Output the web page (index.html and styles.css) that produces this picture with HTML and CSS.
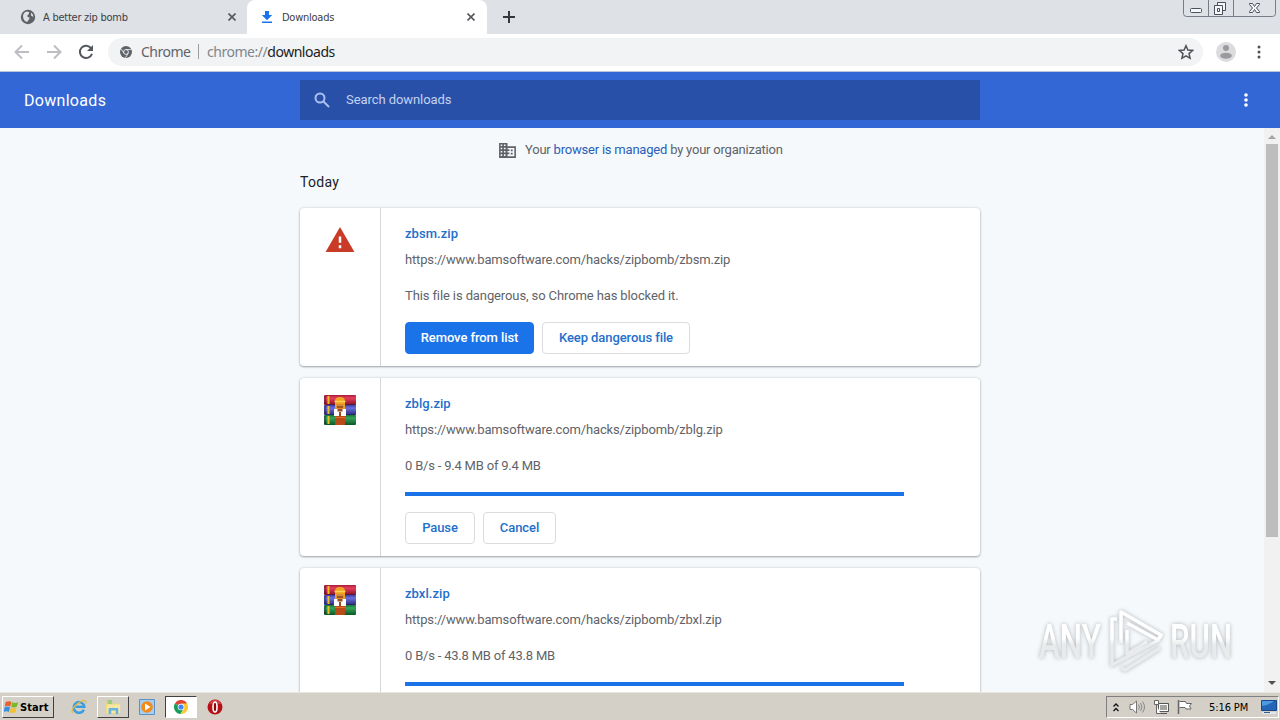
FILE: index.html
```html
<!DOCTYPE html>
<html lang="en">
<head>
  <meta charset="UTF-8">
  <title>Downloads</title>
  <link rel="stylesheet" href="styles.css">
</head>
<body>
  <!-- shared icons -->
  <svg class="defs" width="0" height="0">
    <linearGradient id="red" x2="0" y2="1"><stop offset="0" stop-color="#a51c38"/><stop offset=".3" stop-color="#e5405c"/><stop offset="1" stop-color="#8c1025"/></linearGradient>
    <linearGradient id="blue" x2="0" y2="1"><stop offset="0" stop-color="#3b3da0"/><stop offset=".3" stop-color="#6c70dc"/><stop offset="1" stop-color="#292a80"/></linearGradient>
    <linearGradient id="green" x2="0" y2="1"><stop offset="0" stop-color="#187338"/><stop offset=".3" stop-color="#36a55b"/><stop offset="1" stop-color="#0b5628"/></linearGradient>
    <symbol id="rar" viewBox="0 0 32 32">
      <rect y="1" width="32" height="10" rx="1" fill="url(#red)"/>
      <rect y="11" width="32" height="10" rx="1" fill="url(#blue)"/>
      <rect y="21" width="32" height="10" rx="1" fill="url(#green)"/>
      <path d="M1 2v8M1 12v8M1 22v8" stroke="#20143c" stroke-opacity=".4" stroke-width="2"/>
      <path d="M4.500 2v8M4.500 12v8M4.500 22v8" stroke="#e9bd28" stroke-width="2"/>
      <path d="M3 10.500h29M3 20.500h29" stroke="#28204a" stroke-opacity=".55"/>
      <rect x="11" y="22" width="10" height="9" fill="#b84b18"/>
      <path d="M11 16V7q0-4 5-4t5 4v9z" fill="#f0a321"/>
      <path d="M10.500 7.500h11" stroke="#ffd05a" stroke-width="1.500"/>
      <path d="M12.500 10h7v5h-7z" fill="#d98a3c"/>
      <path d="M13 13h6" stroke="#8a4316" stroke-width="1.500"/>
      <path d="M10 15h12v7H10z" fill="#fff"/>
      <path d="M13.500 15h5v2.500h-5zM15 18h2v4h-2z" fill="#9a4a24"/>
      <path d="M11 23.500h10" stroke="#e36e2c"/>
    </symbol>
  </svg>

  <div class="tabstrip">
    <div class="tab">
      <svg class="favicon" viewBox="0 0 16 16"><circle cx="8" cy="8" r="7.200" fill="#5f6368"/><path d="M3 7.500Q3 4 6.500 2.600L9 3v2L7.500 6v2l2 .5L9 10.500 7 13Q3.500 12 3 7.500zM11 3.500q2.500 1.500 2.500 4.500L11 6.500z" fill="#dee1e6"/></svg>
      <span class="tab-title">A better zip bomb</span>
      <svg class="close" viewBox="0 0 8 8"><path d="M.5.5l7 7m0-7l-7 7"/></svg>
    </div>
    <div class="tab active">
      <svg class="favicon" viewBox="0 0 16 16"><path d="M6 2h4v4h3.200L8 11.200 2.800 6H6zM3 12.500h10V14H3z" fill="#1a73e8"/></svg>
      <span class="tab-title">Downloads</span>
      <svg class="close" viewBox="0 0 8 8"><path d="M.5.5l7 7m0-7l-7 7"/></svg>
    </div>
    <svg class="plus" viewBox="0 0 12 12"><path d="M6 0v12M0 6h12"/></svg>
    <svg class="winbtns" viewBox="0 0 93 17">
      <path d="M.5 0v13.500q0 3 3 3h86q3 0 3-3V0M25.500 0v16M50.500 0v16" fill="none" stroke="#777d87"/>
      <g fill="#f5f6f8" stroke="#4b515c"><rect x="7.500" y="8.500" width="11" height="4" rx="1"/><path d="M34.500 2.500h8v8h-8z"/><path d="M31.500 5.500h8v9h-8z"/><path d="M34.500 8.500h2v3h-2z"/><path d="M66.500 3.500h3l2 3 2-3h3v1l-3 3.500 3 3.500v1h-3l-2-3-2 3h-3v-1l3-3.500-3-3.500z"/></g>
    </svg>
  </div>

  <div class="toolbar">
    <svg class="nav off" viewBox="0 0 16 16"><path d="M15 8H2M8 1.500L1.500 8 8 14.500"/></svg>
    <svg class="nav off" viewBox="0 0 16 16"><path d="M1 8h13M8 1.500L14.500 8 8 14.500"/></svg>
    <svg class="nav" viewBox="0 0 16 16"><path d="M13.200 4.300A6.200 6.200 0 1 0 14 9.800"/><path d="M15 1v6H9z" class="fill"/></svg>
    <div class="omnibox">
      <svg class="site" viewBox="0 0 12 12"><circle cx="6" cy="6" r="6" fill="#5f6368"/><circle cx="6" cy="6" r="2.400" fill="#5f6368" stroke="#f1f3f4" stroke-width=".9"/><path d="M6 3.500h5.500M3.800 7.200L1.200 2.800M8.200 7.200l-2.700 4.500" stroke="#f1f3f4" stroke-width=".8"/></svg>
      <span class="scheme-name">Chrome</span>
      <span class="sep"></span>
      <span class="url">chrome://<b>downloads</b></span>
      <svg class="star" viewBox="0 0 16 16"><path d="M8 1.700l1.900 4.400 4.700.4-3.600 3.100 1.100 4.700L8 11.800l-4.100 2.500L5 9.600 1.400 6.500l4.700-.4z"/></svg>
    </div>
    <svg class="avatar" viewBox="0 0 20 20"><circle cx="10" cy="10" r="10" fill="#dcdcde"/><circle cx="10" cy="6" r="3" fill="#999b9e"/><ellipse cx="10" cy="13.700" rx="5.800" ry="3" fill="#999b9e"/></svg>
    <svg class="dots" viewBox="0 0 4 14"><circle cx="2" cy="2" r="1.500"/><circle cx="2" cy="7" r="1.500"/><circle cx="2" cy="12" r="1.500"/></svg>
  </div>

  <header class="header">
    <h1>Downloads</h1>
    <div class="search">
      <svg viewBox="0 0 16 16"><circle cx="6" cy="6" r="4.500"/><path d="M9.500 9.500l5.500 5.500"/></svg>
      <span>Search downloads</span>
    </div>
    <svg class="dots light" viewBox="0 0 4 14"><circle cx="2" cy="2" r="1.800"/><circle cx="2" cy="7" r="1.800"/><circle cx="2" cy="12" r="1.800"/></svg>
  </header>

  <div class="content">
    <main class="page">
      <div class="managed">
        <svg viewBox="0 0 18 16"><path fill-rule="evenodd" d="M0 0h9v3.500h9V16H0zM1.700 1.700v1.600h1.700V1.700zm3.500 0v1.600h1.700V1.700zM1.700 5v1.600h1.700V5zm3.500 0v1.600h1.700V5zM1.700 8.500v1.600h1.700V8.500zm3.500 0v1.600h1.700V8.500zM1.700 12v1.900h1.700V12zm3.500 0v1.900h1.700V12zM9 5.200v1.500h2v1.800H9v1.600h2v1.800H9v2.300h7.300v-9zM12.500 7h2v1.700h-2zm0 3.500h2v1.700h-2z"/></svg>
        <span>Your <a>browser is managed</a> by your organization</span>
      </div>
      <h3>Today</h3>

      <section class="card danger">
        <div class="icon"><svg class="warn" viewBox="0 0 30 26"><path d="M15 0l15 26H0z" fill="#c93a27"/><path d="M15 10v6.500M15 19v3" stroke="#fff" stroke-width="2.600"/></svg></div>
        <div class="details">
          <a class="name">zbsm.zip</a>
          <div class="link">https://www.bamsoftware.com/hacks/zipbomb/zbsm.zip</div>
          <div class="status">This file is dangerous, so Chrome has blocked it.</div>
          <div class="buttons"><button class="primary b1">Remove from list</button><button class="b2">Keep dangerous file</button></div>
        </div>
      </section>

      <section class="card">
        <div class="icon"><svg class="rar"><use href="#rar"/></svg></div>
        <div class="details">
          <a class="name">zblg.zip</a>
          <div class="link">https://www.bamsoftware.com/hacks/zipbomb/zblg.zip</div>
          <div class="status speed">0 B/s - 9.4 MB of 9.4 MB</div>
          <div class="progress"></div>
          <div class="buttons"><button class="b3">Pause</button><button class="b4">Cancel</button></div>
        </div>
      </section>

      <section class="card">
        <div class="icon"><svg class="rar"><use href="#rar"/></svg></div>
        <div class="details">
          <a class="name">zbxl.zip</a>
          <div class="link">https://www.bamsoftware.com/hacks/zipbomb/zbxl.zip</div>
          <div class="status speed">0 B/s - 43.8 MB of 43.8 MB</div>
          <div class="progress"></div>
        </div>
      </section>
    </main>
    <div class="scrollbar">
      <svg viewBox="0 0 8 4"><path d="M0 4l4-4 4 4z" fill="#a3a3a3"/></svg>
      <div class="thumb"></div>
      <svg viewBox="0 0 8 4"><path d="M0 0h8L4 4z" fill="#505050"/></svg>
    </div>
    <svg class="watermark" viewBox="0 0 216 80">
      <defs><linearGradient id="wm" gradientUnits="userSpaceOnUse" x1="0" y1="38" x2="0" y2="45"><stop stop-color="#fff"/><stop offset="1" stop-color="#e9eaeb"/></linearGradient></defs>
      <g fill="url(#wm)">
        <text x="11" y="58" textLength="62" lengthAdjust="spacingAndGlyphs">ANY</text>
        <text x="142" y="58" textLength="62" lengthAdjust="spacingAndGlyphs">RUN</text>
      </g>
      <path d="M89 19h-5v46l47-25M93 43V12l40 23-3 5-31-17M93 68l4 2 35-22M99 30v24l20-12" fill="none" stroke="url(#wm)" stroke-width="3.500" stroke-linejoin="round"/>
    </svg>
  </div>

  <footer class="taskbar">
    <div class="start">
      <svg viewBox="0 0 18 16"><path d="M2 2q4-2 7 0L7.500 7.500Q4 5.500.8 7.500z" fill="#e8602c"/><path d="M10 2.300q3.500 2 7-.3L15.500 7.500q-3.500 2-7 .3z" fill="#79b928"/><path d="M.6 8.500q3.400-2 6.700 0L5.800 14Q3 12-.5 14z" fill="#3b8ede"/><path d="M8.300 8.800q3.500 2 7-.3L13.800 14q-3.500 2.200-7 .3z" fill="#f5c02c"/></svg>
      <span>Start</span>
    </div>
    <div class="task ie"><svg viewBox="0 0 18 18"><path d="M14.500 12A6 6 0 1 1 15 8.800H5" fill="none" stroke="#3b9de0" stroke-width="2.800"/><path d="M2 15.500C-2 12 11 0 16 2q1.500 1 .3 3" fill="none" stroke="#e8b83a" stroke-width="1.400"/></svg></div>
    <div class="task raised"><svg viewBox="0 0 18 18"><path d="M1 3h6l1 2h8v12H1z" fill="#edd376"/><path d="M3 1h5v5H3z" fill="#9ecb7d"/><path d="M2 6h15v10H2z" fill="#f8e7a2"/><path d="M4 17v-6q0-1 1-1h9q1 0 1 1v6h-3v-4H7v4z" fill="#65b4df"/></svg></div>
    <div class="task"><svg viewBox="0 0 16 16"><path d="M.5.500h15v15H.5z" fill="#a6cef0" stroke="#5a92c6"/><circle cx="8" cy="8" r="5.800" fill="#f28a1c"/><path d="M6 4.500v7L11.500 8z" fill="#fff"/></svg></div>
    <div class="task pressed"><svg viewBox="0 0 14 14"><path d="M7 7L.9 3.500A7 7 0 0 1 13.100 3.500z" fill="#dc4437"/><path d="M7 7L.9 3.500A7 7 0 0 0 6.500 14l3.200-5.500z" fill="#189e58"/><path d="M7 3.500h6.100A7 7 0 0 1 6.500 14l3.500-5z" fill="#fbc92e"/><circle cx="7" cy="7" r="3.300" fill="#fff"/><circle cx="7" cy="7" r="2.600" fill="#4285f4"/></svg></div>
    <div class="task opera"><svg viewBox="0 0 16 16"><circle cx="8" cy="8" r="7.500" fill="#b70f16"/><path d="M2 5Q5 0 10 1q3 1 4 4z" fill="#e05a58" opacity=".6"/><ellipse cx="8" cy="8" rx="2" ry="5" fill="#8b080e" stroke="#fff" stroke-width="1.600"/></svg></div>
    <div class="tray">
      <svg class="chev" viewBox="0 0 6 9"><path d="M.5 3.500L3 1l2.500 2.500M.5 8L3 5.500 5.500 8" fill="none" stroke="#111" stroke-width="1.300"/></svg>
      <svg class="spk" viewBox="0 0 16 16"><path d="M1 5.500h2.500L7.500 2v12l-4-3.500H1z" fill="#fff" stroke="#777"/><path d="M9.500 5.500q2 2.500 0 5M11.500 4q3 4 0 8M13.500 2.500q4 5.500 0 11" fill="none" stroke="#888"/></svg>
      <svg class="net" viewBox="0 0 16 16"><path d="M5.500 4.500h10v8h-10zM7 14.500h7" fill="#a5a5a0" stroke="#555"/><path d="M6.500 5.500h8v6h-8z" fill="none" stroke="#fff"/><path d="M1.500 1.500h4v4h-4zM3.500 6v8.500h4" fill="#fff" stroke="#666"/></svg>
      <svg class="flag" viewBox="0 0 16 16"><path d="M2.500 2.500h6l1 2h5l-2 2.500 1.500 3h-5l-1-1.500H2.500" fill="#fff" stroke="#666"/><path d="M1.500 1v14" stroke="#666" stroke-width="1.500"/></svg>
      <span class="clock">5:16 PM</span>
      <svg class="desk" viewBox="0 0 16 14"><path d="M.5.500h15v10H.5z" fill="#2465b5" stroke="#174a8d"/><path d="M1 6Q8 5 13 1H1z" fill="#4c9ae0"/><path d="M1 12h14v2H1z" fill="#dfe6ec"/><path d="M3 12.500h6" stroke="#345d8c"/></svg>
    </div>
  </footer>
</body>
</html>
```
FILE: styles.css
```css
* {
  margin: 0;
  padding: 0;
  box-sizing: border-box;
}

body {
  width: 1280px;
  height: 720px;
  overflow: hidden;
  display: flex;
  flex-direction: column;
  font-family: Roboto, sans-serif;
  font-size: 13px;
  white-space: nowrap;
}

svg {
  display: block;
  flex: none;
}

.defs {
  position: absolute;
}

/* tabs */
.tabstrip {
  height: 34px;
  flex: none;
  display: flex;
  background: #dee1e6;
}

.tab {
  width: 247px;
  display: flex;
  align-items: center;
  padding: 0 11px 0 20px;
  font-family: "DejaVu Sans Condensed", "DejaVu Sans", sans-serif;
  font-stretch: condensed;
  font-size: 11px;
  color: #3c4043;
}

.tab.active {
  width: 240px;
  padding: 0 12px;
  background: #fff;
  border-radius: 8px 8px 0 0;
}

.favicon {
  width: 16px;
  height: 16px;
  margin-right: 7px;
}

.close {
  width: 8px;
  height: 8px;
  margin-left: auto;
  fill: none;
  stroke: #55595e;
  stroke-width: 1.6;
}

.tab-title {
  letter-spacing: -0.25px;
}

.plus {
  width: 12px;
  height: 12px;
  margin: 11px 0 0 16px;
  stroke: #34383d;
  stroke-width: 2;
}

.winbtns {
  width: 93px;
  height: 17px;
  margin-left: auto;
  margin-right: 4px;
}

/* toolbar */
.toolbar {
  height: 38px;
  flex: none;
  display: flex;
  align-items: center;
  padding: 0 20px 2px 14px;
  background: #fff;
  border-bottom: 1px solid #b9c5df;
}

.nav {
  width: 16px;
  height: 16px;
  margin-right: 16px;
  fill: none;
  stroke: #54585d;
  stroke-width: 2;
}

.nav .fill {
  fill: #54585d;
  stroke: none;
}

.off {
  stroke: #bcbec1;
}

.omnibox {
  width: 1095px;
  height: 28px;
  flex: none;
  margin-left: -2px;
  display: flex;
  align-items: center;
  padding: 0 9px 0 12px;
  border-radius: 14px;
  background: #f1f3f4;
  font-family: "Noto Sans", sans-serif;
  font-size: 14px;
  color: #5f6368;
}

.site {
  width: 12px;
  height: 12px;
  margin-right: 9px;
}

.scheme-name {
  width: 57px;
  letter-spacing: -0.5px;
}

.sep {
  width: 1px;
  height: 15px;
  margin-right: 8px;
  background: #9a9da1;
}

.url {
  color: #80868b;
  letter-spacing: -0.47px;
}

.url b {
  font-weight: normal;
  color: #202124;
}

.star {
  width: 16px;
  height: 16px;
  margin-left: auto;
  fill: none;
  stroke: #4f5358;
  stroke-width: 1.5;
}

.avatar {
  width: 20px;
  height: 20px;
  margin: 0 21px 0 13px;
}

.dots {
  width: 4px;
  height: 14px;
  fill: #4f5358;
}

/* page header */
.header {
  height: 56px;
  flex: none;
  display: flex;
  align-items: center;
  background: #3367d6;
  color: #fff;
}

.header h1 {
  width: 300px;
  padding-left: 24px;
  font-size: 16px;
  font-weight: normal;
  letter-spacing: 0.3px;
}

.search {
  width: 680px;
  height: 40px;
  display: flex;
  align-items: center;
  padding-left: 14px;
  background: #2950a8;
  color: #c3d2f1;
}

.search svg {
  width: 16px;
  height: 16px;
  margin-right: 16px;
  fill: none;
  stroke: #a9c0f0;
  stroke-width: 2;
}

.search span {
  padding-bottom: 2px;
  letter-spacing: -0.07px;
}

.light {
  margin-left: 264px;
  fill: #fff;
}

/* downloads list */
.content {
  position: relative;
  height: 564px;
  flex: none;
  display: flex;
  overflow: hidden;
  background: #f5f9fc;
}

.page {
  width: 680px;
  margin-left: 300px;
}

.managed {
  height: 44px;
  display: flex;
  align-items: center;
  padding-left: 199px;
  color: #5f6368;
  letter-spacing: -0.21px;
}

.managed span {
  padding-bottom: 2px;
}

.managed svg {
  width: 17px;
  height: 15px;
  margin-right: 9px;
  fill: #5f6368;
}

.managed a {
  color: #2a5fb8;
}

h3 {
  height: 36px;
  line-height: 21px;
  font-size: 14px;
  font-weight: normal;
  letter-spacing: 0.3px;
  color: #202124;
}

.card {
  height: 178px;
  margin-bottom: 12px;
  display: flex;
  background: #fff;
  border-radius: 4px;
  box-shadow: 0 1px 2px rgba(60, 64, 67, .4), 0 0 3px rgba(60, 64, 67, .2);
}

.danger {
  height: 158px;
}

.icon {
  width: 81px;
  border-right: 1px solid #d5d6d8;
}

.rar {
  width: 32px;
  height: 32px;
  margin: 16px 0 0 24px;
}

.warn {
  width: 30px;
  height: 25px;
  margin: 19px 0 0 25px;
}

.details {
  padding: 16px 0 0 24px;
  color: #5f6368;
}

.name {
  display: block;
  height: 26px;
  line-height: 20px;
  font-weight: 500;
  letter-spacing: 0.05px;
  color: #236fcc;
}

.link {
  height: 36px;
  line-height: 20px;
  letter-spacing: -0.15px;
}

.status {
  height: 36px;
  line-height: 20px;
  letter-spacing: -0.11px;
}

.speed {
  letter-spacing: -0.2px;
}

.progress {
  width: 499px;
  height: 4px;
  margin-bottom: 16px;
  background: #1a73e8;
}

.buttons {
  display: flex;
  gap: 8px;
}

button {
  height: 32px;
  padding-bottom: 2px;
  border: 1px solid #dadce0;
  border-radius: 4px;
  background: #fff;
  color: #236fcc;
  font: 500 13px Roboto, sans-serif;
  letter-spacing: -0.08px;
}

.primary {
  border-color: #1a73e8;
  background: #1a73e8;
  color: #fff;
}

.b1 { width: 129px; }
.b2 { width: 148px; }
.b3 { width: 70px; }
.b4 { width: 73px; }

.scrollbar {
  width: 16px;
  margin-left: auto;
  display: flex;
  flex-direction: column;
  align-items: center;
  padding: 7px 0 7px;
  background: #f1f1f1;
}

.scrollbar svg {
  width: 8px;
  height: 4px;
}

.thumb {
  width: 12px;
  height: 393px;
  margin: 5px 0 auto;
  background: #bdbdbd;
}

.watermark {
  position: absolute;
  left: 1028px;
  top: 472px;
  width: 216px;
  height: 80px;
  overflow: visible;
  font: 500 48px Roboto, sans-serif;
  filter: drop-shadow(0 0 2px rgba(90, 95, 100, .45));
}

/* taskbar */
.taskbar {
  flex: 1;
  display: flex;
  align-items: center;
  padding: 1px 0 0 2px;
  background: #d4d0c8;
  border-top: 1px solid #e7e5df;
  font-family: "DejaVu Sans Condensed", "DejaVu Sans", sans-serif;
  font-stretch: condensed;
  font-size: 11px;
  color: #000;
}

.start {
  width: 52px;
  height: 22px;
  display: flex;
  align-items: center;
  padding-left: 1px;
  border: 1px solid;
  border-color: #fff #404040 #404040 #fff;
  font-weight: bold;
}

.start svg {
  width: 15px;
  height: 16px;
  margin-right: 1px;
}

.start span {
  letter-spacing: 0.1px;
}

.task {
  width: 32px;
  height: 22px;
  margin-right: 2px;
  display: flex;
  align-items: center;
  justify-content: center;
}

.task svg {
  width: 16px;
  height: 16px;
}

.ie {
  margin-left: 9px;
}

.raised {
  border: 1px solid;
  border-color: #fff #404040 #404040 #fff;
}

.pressed {
  background: #fff;
  border: 1px solid;
  border-color: #404040 #fff #fff #404040;
}

.pressed svg {
  width: 14px;
  height: 14px;
}

.tray {
  width: 173px;
  height: 22px;
  margin: 0 1px 0 auto;
  display: flex;
  align-items: center;
  padding-left: 6px;
  border: 1px solid;
  border-color: #808080 #fff #fff #808080;
}

.tray svg {
  width: 16px;
  height: 16px;
}

.tray .chev {
  width: 6px;
  height: 9px;
  margin-right: 10px;
}

.tray .spk,
.tray .net {
  margin-right: 8px;
}

.clock {
  margin-left: 16px;
  letter-spacing: -0.1px;
}

.tray .desk {
  height: 14px;
  margin-left: auto;
  margin-right: 1px;
}
```
